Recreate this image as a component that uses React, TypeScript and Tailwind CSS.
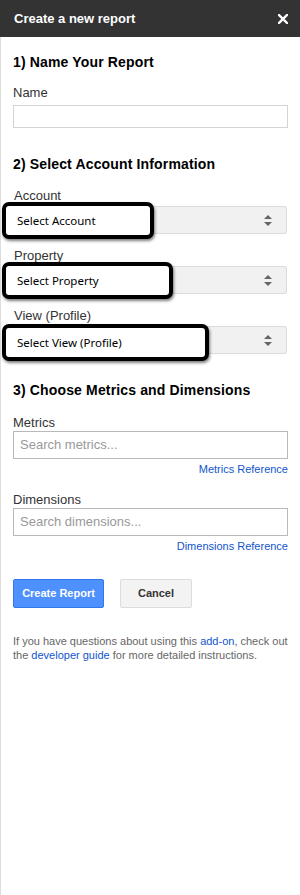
import React from 'react';

const arial = { fontFamily: '"Liberation Sans", Arial, sans-serif' };

const Label = ({ children, className = '' }: { children: React.ReactNode; className?: string }) => (
  <div className={`text-[13px] leading-[16px] text-[#333] ${className}`}>{children}</div>
);

const Heading = ({ children, className = '' }: { children: React.ReactNode; className?: string }) => (
  <h2 className={`text-[14px] leading-[18px] font-bold text-black tracking-[0.15px] ${className}`}>{children}</h2>
);

const SelectArrows = () => (
  <svg width="8" height="11" viewBox="0 0 8 11" className="text-[#666]">
    <path d="M4 0 L8 4 L0 4 Z" fill="currentColor" />
    <path d="M0 7 L8 7 L4 11 Z" fill="currentColor" />
  </svg>
);

// black-framed annotation boxes laid over the selects
const Callout = ({ text, className }: { text: string; className: string }) => (
  <div
    className={`absolute left-[1px] h-[37px] rounded-[7px] border-[4px] border-black bg-white flex items-center pl-[11px] text-[11.5px] text-black shadow-[1px_2px_3px_rgba(0,0,0,0.5)] ${className}`}
    style={{ fontFamily: '"Noto Sans", "Open Sans", sans-serif' }}
  >
    {text}
  </div>
);

const SelectRow = ({
  label,
  callout,
  calloutClass,
  className = '',
}: {
  label: string;
  callout: string;
  calloutClass: string;
  className?: string;
}) => (
  <div className={className}>
    <Label className="px-[13px]">{label}</Label>
    <div className="relative mt-[2px]">
      <div className="mx-[13px] h-[28px] rounded-[2px] border border-[#dcdcdc] bg-[#f1f1f1] flex items-center justify-end pr-[14px]">
        <SelectArrows />
      </div>
      <Callout text={callout} className={calloutClass} />
    </div>
  </div>
);

const SearchInput = ({ placeholder }: { placeholder: string }) => (
  <div className="h-[28px] border border-[#b9b9b9] bg-white flex items-center px-[6px] text-[13px] text-[#999]">
    {placeholder}
  </div>
);

const RefLink = ({ children }: { children: React.ReactNode }) => (
  <div className="mt-[3px] text-right text-[11px] leading-[14px] text-[#15c]">{children}</div>
);

export default function App() {
  return (
    <div className="w-[300px] h-[895px] bg-white flex flex-col" style={arial}>
      <div className="h-[37px] bg-[#333] flex items-center justify-between pl-[14px] pr-[12px] shrink-0">
        <span className="text-white font-bold text-[13px]">Create a new report</span>
        <svg width="10" height="10" viewBox="0 0 10 10">
          <path d="M1 1 L9 9 M9 1 L1 9" stroke="white" strokeWidth="2.4" strokeLinecap="square" />
        </svg>
      </div>

      <div className="flex-1 border-l border-[#dedede] pt-[16px]">
        <div className="px-[12px]">
          <Heading>1) Name Your Report</Heading>
          <Label className="mt-[14px]">Name</Label>
          <div className="mt-[4px] h-[23px] border border-[#d4d4d4] bg-white" />
          <Heading className="mt-[27px]">2) Select Account Information</Heading>
        </div>

        <SelectRow
          className="mt-[15px]"
          label="Account"
          callout="Select Account"
          calloutClass="top-[-4px] w-[152px]"
        />
        <SelectRow
          className="mt-[14px]"
          label="Property"
          callout="Select Property"
          calloutClass="top-[-4px] w-[171px]"
        />
        <SelectRow
          className="mt-[14px]"
          label="View (Profile)"
          callout="Select View (Profile)"
          calloutClass="top-[-2px] w-[207px]"
        />

        <div className="px-[12px]">
          <Heading className="mt-[27px]">3) Choose Metrics and Dimensions</Heading>

          <Label className="mt-[16px]">Metrics</Label>
          <SearchInput placeholder="Search metrics..." />
          <RefLink>Metrics Reference</RefLink>

          <Label className="mt-[16px]">Dimensions</Label>
          <SearchInput placeholder="Search dimensions..." />
          <RefLink>Dimensions Reference</RefLink>

          <div className="mt-[26px] flex gap-[16px]">
            <button className="h-[29px] w-[91px] rounded-[2px] border border-[#3079ed] bg-[#4d90fe] text-white text-[11px] font-bold">
              Create Report
            </button>
            <button className="h-[29px] w-[72px] rounded-[2px] border border-[#dcdcdc] bg-[#f3f3f3] text-[#333] text-[11px] font-bold">
              Cancel
            </button>
          </div>

          <p className="mt-[26px] text-[11px] leading-[14px] text-[#666]">
            If you have questions about using this <span className="text-[#15c]">add-on</span>, check out the{' '}
            <span className="text-[#15c]">developer guide</span> for more detailed instructions.
          </p>
        </div>
      </div>
    </div>
  );
}
